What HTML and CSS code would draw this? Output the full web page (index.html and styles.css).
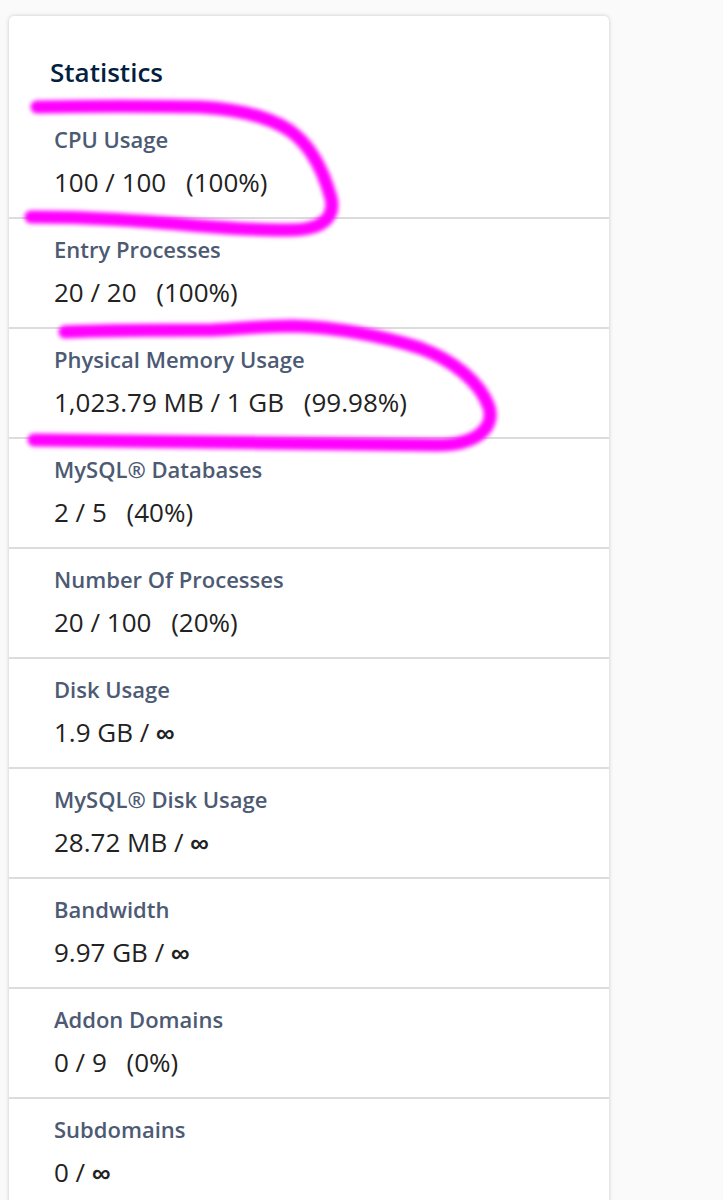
FILE: index.html
```html
<!DOCTYPE html>
<html lang="en">
<head>
    <meta charset="UTF-8">
    <title>Statistics</title>
    <meta name="viewport" content="width=device-width, initial-scale=1">
    <link rel="stylesheet" href="styles.css">
</head>
<body>
    <main class="page">
        <section class="panel">
            <h2 class="panel-title">Statistics</h2>
            <dl class="stats">
                <div class="stat">
                    <dt>CPU Usage</dt>
                    <dd>100 / 100 <span class="percent">(100%)</span></dd>
                </div>
                <div class="stat">
                    <dt>Entry Processes</dt>
                    <dd>20 / 20 <span class="percent">(100%)</span></dd>
                </div>
                <div class="stat">
                    <dt>Physical Memory Usage</dt>
                    <dd>1,023.79 MB / 1 GB <span class="percent">(99.98%)</span></dd>
                </div>
                <div class="stat">
                    <dt>MySQL® Databases</dt>
                    <dd>2 / 5 <span class="percent">(40%)</span></dd>
                </div>
                <div class="stat">
                    <dt>Number Of Processes</dt>
                    <dd>20 / 100 <span class="percent">(20%)</span></dd>
                </div>
                <div class="stat">
                    <dt>Disk Usage</dt>
                    <dd>1.9 GB / <span class="unlimited">∞</span></dd>
                </div>
                <div class="stat">
                    <dt>MySQL® Disk Usage</dt>
                    <dd>28.72 MB / <span class="unlimited">∞</span></dd>
                </div>
                <div class="stat">
                    <dt>Bandwidth</dt>
                    <dd>9.97 GB / <span class="unlimited">∞</span></dd>
                </div>
                <div class="stat">
                    <dt>Addon Domains</dt>
                    <dd>0 / 9 <span class="percent">(0%)</span></dd>
                </div>
                <div class="stat">
                    <dt>Subdomains</dt>
                    <dd>0 / <span class="unlimited">∞</span></dd>
                </div>
            </dl>
        </section>

        <!-- marker strokes over the two maxed out stats -->
        <svg class="marker" width="520" height="470" viewBox="0 0 520 470" aria-hidden="true">
            <path d="M37 107C90 106 150 106 200 107C237 109 267 116 289 130C311 145 324 173 331 198C336 219 320 230 290 230C215 231 150 217 31 217"/>
            <path d="M65 332C110 330 165 330 213 330C245 328 267 326 293 326C335 327 383 336 420 348C453 360 480 382 489 407C495 427 478 445 437 445C300 443 170 442 34 440"/>
        </svg>
    </main>
</body>
</html>
```
FILE: styles.css
```css
html {
    height: 100%;
    overflow: hidden;
}

body {
    margin: 0;
    background-color: #fafafa;
    font-family: "Open Sans", "Noto Sans", sans-serif;
    font-size: 26px;
    line-height: 36px;
    color: #222;
}

.page {
    position: relative;
    padding: 16px 114px 16px 9px;
}

.panel {
    padding-top: 38px;
    background-color: #fff;
    border-radius: 5px;
    box-shadow: 0 0 4px rgba(0, 0, 0, 0.2);
}

.panel-title {
    margin: 0 0 19px;
    padding: 0 41px;
    font-size: 26px;
    font-weight: 600;
    color: #021e40;
}

.stats {
    margin: 0;
}

.stat {
    padding: 14px 45px 17px;
    border-bottom: 2px solid #dcdcdc;
}

.stat dt {
    margin-bottom: 9px;
    font-size: 22px;
    line-height: 32px;
    font-weight: 600;
    color: #4d5a73;
}

.stat dd {
    margin: 0;
}

.percent {
    margin-left: 13px;
}

.unlimited {
    font-family: "Liberation Sans", sans-serif;
    font-weight: bold;
    line-height: 1;
}

/* Hand drawn highlights */
.marker {
    position: absolute;
    top: 0;
    left: 0;
    pointer-events: none;
}

.marker path {
    fill: none;
    stroke: #ff00ff;
    stroke-width: 13;
    stroke-linecap: round;
    filter: blur(2px);
}
```
